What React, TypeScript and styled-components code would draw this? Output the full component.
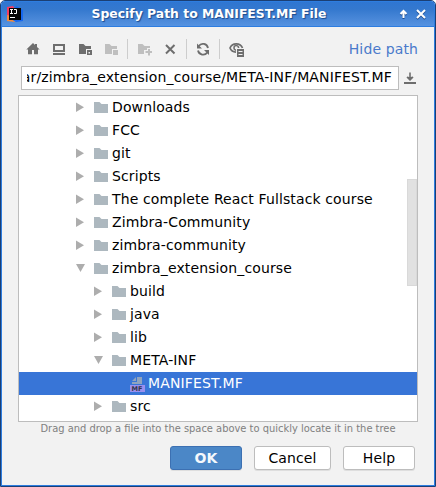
import React from "react";
import styled, { createGlobalStyle, css } from "styled-components";

const Global = createGlobalStyle`
  * { box-sizing: border-box; }
  html, body { margin: 0; padding: 0; }
  body { font-family: "DejaVu Sans", sans-serif; font-size: 14px; color: #000; overflow: hidden; background: #fff; }
`;

const Window = styled.div`
  width: 436px;
  height: 487px;
  display: flex;
  flex-direction: column;
  background: #f2f2f2;
  border: 1px solid #1b3f74;
  border-radius: 5px 5px 0 0;
  overflow: hidden;
`;

const TitleBar = styled.header`
  height: 26px;
  flex: none;
  display: flex;
  align-items: center;
  padding: 0 8px 0 5px;
  background: linear-gradient(#2f76d2, #3478ce 30%, #4b89d9 75%, #5593e2);
  border: 1px solid #2d7de0;
`;

const Title = styled.h1`
  margin: 0;
  flex: 1;
  padding-right: 4px;
  text-align: center;
  font-size: 12.4px;
  line-height: 24px;
  font-weight: bold;
  color: #fff;
  white-space: nowrap;
  text-shadow: 1px 1px 1px #1c4a8c;
`;

const TitleButtons = styled.div`
  display: flex;
  gap: 8px;
  svg { display: block; filter: drop-shadow(0 1px 0 #1c4a8c); }
`;

const Body = styled.main`
  flex: 1;
  display: flex;
  flex-direction: column;
  border: solid #2d7de0;
  border-width: 0 1px 1px;
  padding: 9px 16px 0;
`;

const Toolbar = styled.div`
  height: 26px;
  flex: none;
  display: flex;
  align-items: center;
  padding-left: 7px;
`;

const ToolIcon = styled.span<{ $gap?: number; $dim?: boolean }>`
  width: 16px;
  height: 16px;
  flex: none;
  margin-right: ${(p) => p.$gap ?? 10}px;
  color: ${(p) => (p.$dim ? "#bfbfbf" : "#6e6e6e")};
  svg { display: block; }
`;

const Separator = styled.span<{ $gap?: number }>`
  width: 1px;
  height: 20px;
  margin-right: ${(p) => p.$gap ?? 9}px;
  background: #cdcdcd;
`;

const PathLink = styled.a`
  margin-left: auto;
  color: #4a7acb;
  letter-spacing: 0.12px;
  white-space: nowrap;
`;

const PathRow = styled.div`
  flex: none;
  display: flex;
  align-items: center;
  gap: 3px;
  margin: 4px 0 5px 3px;
`;

const PathField = styled.div`
  width: 378px;
  height: 24px;
  display: flex;
  border: 1px solid #bdbdbd;
  background: #fff;
  padding: 0 6px 0 5px;
  line-height: 21px;
`;

const PathText = styled.div`
  flex: 1;
  overflow: hidden;
  display: flex;
  justify-content: flex-end;
  letter-spacing: 0.12px;
  white-space: nowrap;
`;

const Tree = styled.div`
  position: relative;
  flex: none;
  width: 400px;
  height: 327px;
  border: 1px solid #bdbdbd;
  background: #fff;
`;

const Row = styled.div<{ $level: number; $selected?: boolean }>`
  height: 23px;
  display: flex;
  align-items: center;
  padding-left: ${(p) => 56 + p.$level * 18}px;
  white-space: nowrap;
  ${(p) => p.$selected && css`background: #3875d7; color: #fff;`}
`;

const Toggle = styled.span`
  width: 18px;
  height: 17px;
  flex: none;
  svg { display: block; }
`;

const RowIcon = styled.span`
  width: 19px;
  height: 17px;
  flex: none;
  svg { display: block; }
`;

const Label = styled.span`
  line-height: 21px;
  padding-bottom: 1px;
  letter-spacing: 0.12px;
`;

const ScrollThumb = styled.div`
  position: absolute;
  right: 0;
  top: 83px;
  width: 10px;
  height: 107px;
  background: #e1e1e1;
  border: 1px solid #d9d9d9;
`;

const Hint = styled.p`
  margin: 0;
  height: 14px;
  line-height: 13px;
  text-align: center;
  font-family: "DejaVu Sans Condensed", "DejaVu Sans", sans-serif;
  font-stretch: condensed;
  font-size: 11px;
  color: #808080;
  white-space: nowrap;
`;

const Actions = styled.footer`
  display: flex;
  justify-content: flex-end;
  gap: 12px;
  padding: 10px 3px 0 0;
`;

const Button = styled.button<{ $primary?: boolean; $width: number }>`
  width: ${(p) => p.$width}px;
  height: 24px;
  padding: 0;
  font: inherit;
  line-height: 20px;
  letter-spacing: 0.12px;
  border-radius: 3px;
  border: 1px solid #bdbdbd;
  background: #fff;
  color: #000;
  box-shadow: 0 1px 0 #dedede;
  ${(p) => p.$primary && css`
    background: #4b87c7;
    border-color: #3c70b2;
    color: #f4f8fc;
    font-weight: bold;
  `}
`;

const Svg = ({ children }: { children: React.ReactNode }) => (
  <svg width="16" height="16" viewBox="0 0 16 16" fill="currentColor">{children}</svg>
);

const Logo = () => (
  <svg width="16" height="16" viewBox="0 0 16 16">
    <path d="M0 1l6-1 4 6-3 9-7-2z" fill="#f43b62" />
    <path d="M0 9l5 1 3 6-8-1z" fill="#f58a3c" />
    <path d="M9 0l7 4v11l-7 1-5-3z" fill="#1768ef" />
    <path d="M2 2h12v12H2z" fill="#060606" />
    <path d="M3 3.500h3M4.500 3.500v4M3 7.500h3M7 3.500h2.500v4H7M3 11.500h5" stroke="#fff" strokeWidth="1" fill="none" />
  </svg>
);

const FolderIcon = () => (
  <svg width="16" height="16" viewBox="0 0 16 16"><path d="M1 3h5.500l2 2H15v9H1z" fill="#adb8bf" /></svg>
);

const ManifestIcon = () => (
  <svg width="17" height="17" viewBox="0 0 17 17">
    <path d="M8 2h5v7H3V7h5zM7 2v4H3z" fill="#8fa4bf" />
    <path d="M1 10h15v7H1z" fill="#9a90ee" />
    <text x="2.500" y="16" fontSize="6.500" fontWeight="bold" fontFamily="DejaVu Sans, sans-serif" fill="#34344c">MF</text>
  </svg>
);

const Arrow = ({ open }: { open?: boolean }) => (
  <svg width="16" height="16" viewBox="0 0 16 16">
    <path d={open ? "M1 4h9L5.500 12z" : "M1 3.500v9.500L9 8.250z"} fill="#adadad" />
  </svg>
);

type Node = { name: string; level: number; open?: boolean; file?: boolean };

const nodes: Node[] = [
  { name: "Downloads", level: 0 },
  { name: "FCC", level: 0 },
  { name: "git", level: 0 },
  { name: "Scripts", level: 0 },
  { name: "The complete React Fullstack course", level: 0 },
  { name: "Zimbra-Community", level: 0 },
  { name: "zimbra-community", level: 0 },
  { name: "zimbra_extension_course", level: 0, open: true },
  { name: "build", level: 1 },
  { name: "java", level: 1 },
  { name: "lib", level: 1 },
  { name: "META-INF", level: 1, open: true },
  { name: "MANIFEST.MF", level: 2, file: true },
  { name: "src", level: 1 },
];

export default function App() {
  return (
    <>
      <Global />
      <Window>
        <TitleBar>
          <Logo />
          <Title>Specify Path to MANIFEST.MF File</Title>
          <TitleButtons>
            <svg width="9" height="10" viewBox="0 0 9 10"><path d="M4.500 9V2M1.500 5l3-3 3 3" stroke="#fff" strokeWidth="2" fill="none" /></svg>
            <svg width="10" height="10" viewBox="0 0 10 10"><path d="M1 1l8 8M9 1L1 9" stroke="#fff" strokeWidth="2" /></svg>
          </TitleButtons>
        </TitleBar>
        <Body>
          <Toolbar>
            <ToolIcon><Svg><path d="M8 2L1.300 8.500H3V13.300h4V9h2v4.300h4V8.500h1.700L12 6V3h-2v1z" /></Svg></ToolIcon>
            <ToolIcon><Svg><path fillRule="evenodd" d="M2 3h12v8H2zM4 5v4h8V5zM2 12h12v2H2z" /></Svg></ToolIcon>
            <ToolIcon><Svg><path fillRule="evenodd" d="M2 3h4.500l2 2H14v3H9v5H2zM10 9h5v5h-5zM11.500 11v1.500H13V11z" /></Svg></ToolIcon>
            <ToolIcon $dim $gap={8}><Svg><path d="M2 3h4.500l2 2H14v3H9v5H2zM10 9h5v5h-5z" /></Svg></ToolIcon>
            <Separator />
            <ToolIcon $dim $gap={9}><Svg><path d="M1 3h4.500l2 2H13v2h-3v2H7v4H1zM11 8h2v2h2v2h-2v2.500h-2V12H8.500v-2H11z" /></Svg></ToolIcon>
            <ToolIcon $gap={8}><Svg><path d="M4 4l8.500 8.500M12.500 4L4 12.500" stroke="currentColor" strokeWidth="2" /></Svg></ToolIcon>
            <Separator $gap={8} />
            <ToolIcon $gap={8}><Svg><path d="M13 7a5.200 5.200 0 0 0-9.300-2M3 9.500a5.200 5.200 0 0 0 9.300 2" stroke="currentColor" strokeWidth="1.800" fill="none" /><path d="M2 2.500v5h5zM14 14V9H9z" /></Svg></ToolIcon>
            <Separator />
            <ToolIcon>
              <Svg>
                <path d="M7 11.200C4 11 2 9.500 1 7 3 1.500 11.500 1.500 13.500 7" stroke="currentColor" strokeWidth="1.700" fill="none" />
                <path d="M7 9.200A2.300 2.300 0 1 1 9.600 7" stroke="currentColor" strokeWidth="1.500" fill="none" />
                <path fillRule="evenodd" d="M8 8h7v8H8zM9.500 10v1h4v-1zM9.500 13v1h4v-1z" />
              </Svg>
            </ToolIcon>
            <PathLink>Hide path</PathLink>
          </Toolbar>
          <PathRow>
            <PathField><PathText><span>ar/zimbra_extension_course/META-INF/MANIFEST.MF</span></PathText></PathField>
            <ToolIcon $gap={0}><Svg><path d="M7.200 2.500h1.600V7l2-.5.7 1L8 11 4.500 7.500l.7-1 2 .5zM2 12h12v2H2z" /></Svg></ToolIcon>
          </PathRow>
          <Tree>
            {nodes.map((n) => (
              <Row key={n.name} $level={n.level} $selected={n.file}>
                <Toggle>{!n.file && <Arrow open={n.open} />}</Toggle>
                <RowIcon>{n.file ? <ManifestIcon /> : <FolderIcon />}</RowIcon>
                <Label>{n.name}</Label>
              </Row>
            ))}
            <ScrollThumb />
          </Tree>
          <Hint>Drag and drop a file into the space above to quickly locate it in the tree</Hint>
          <Actions>
            <Button $primary $width={72}>OK</Button>
            <Button $width={77}>Cancel</Button>
            <Button $width={72}>Help</Button>
          </Actions>
        </Body>
      </Window>
    </>
  );
}
